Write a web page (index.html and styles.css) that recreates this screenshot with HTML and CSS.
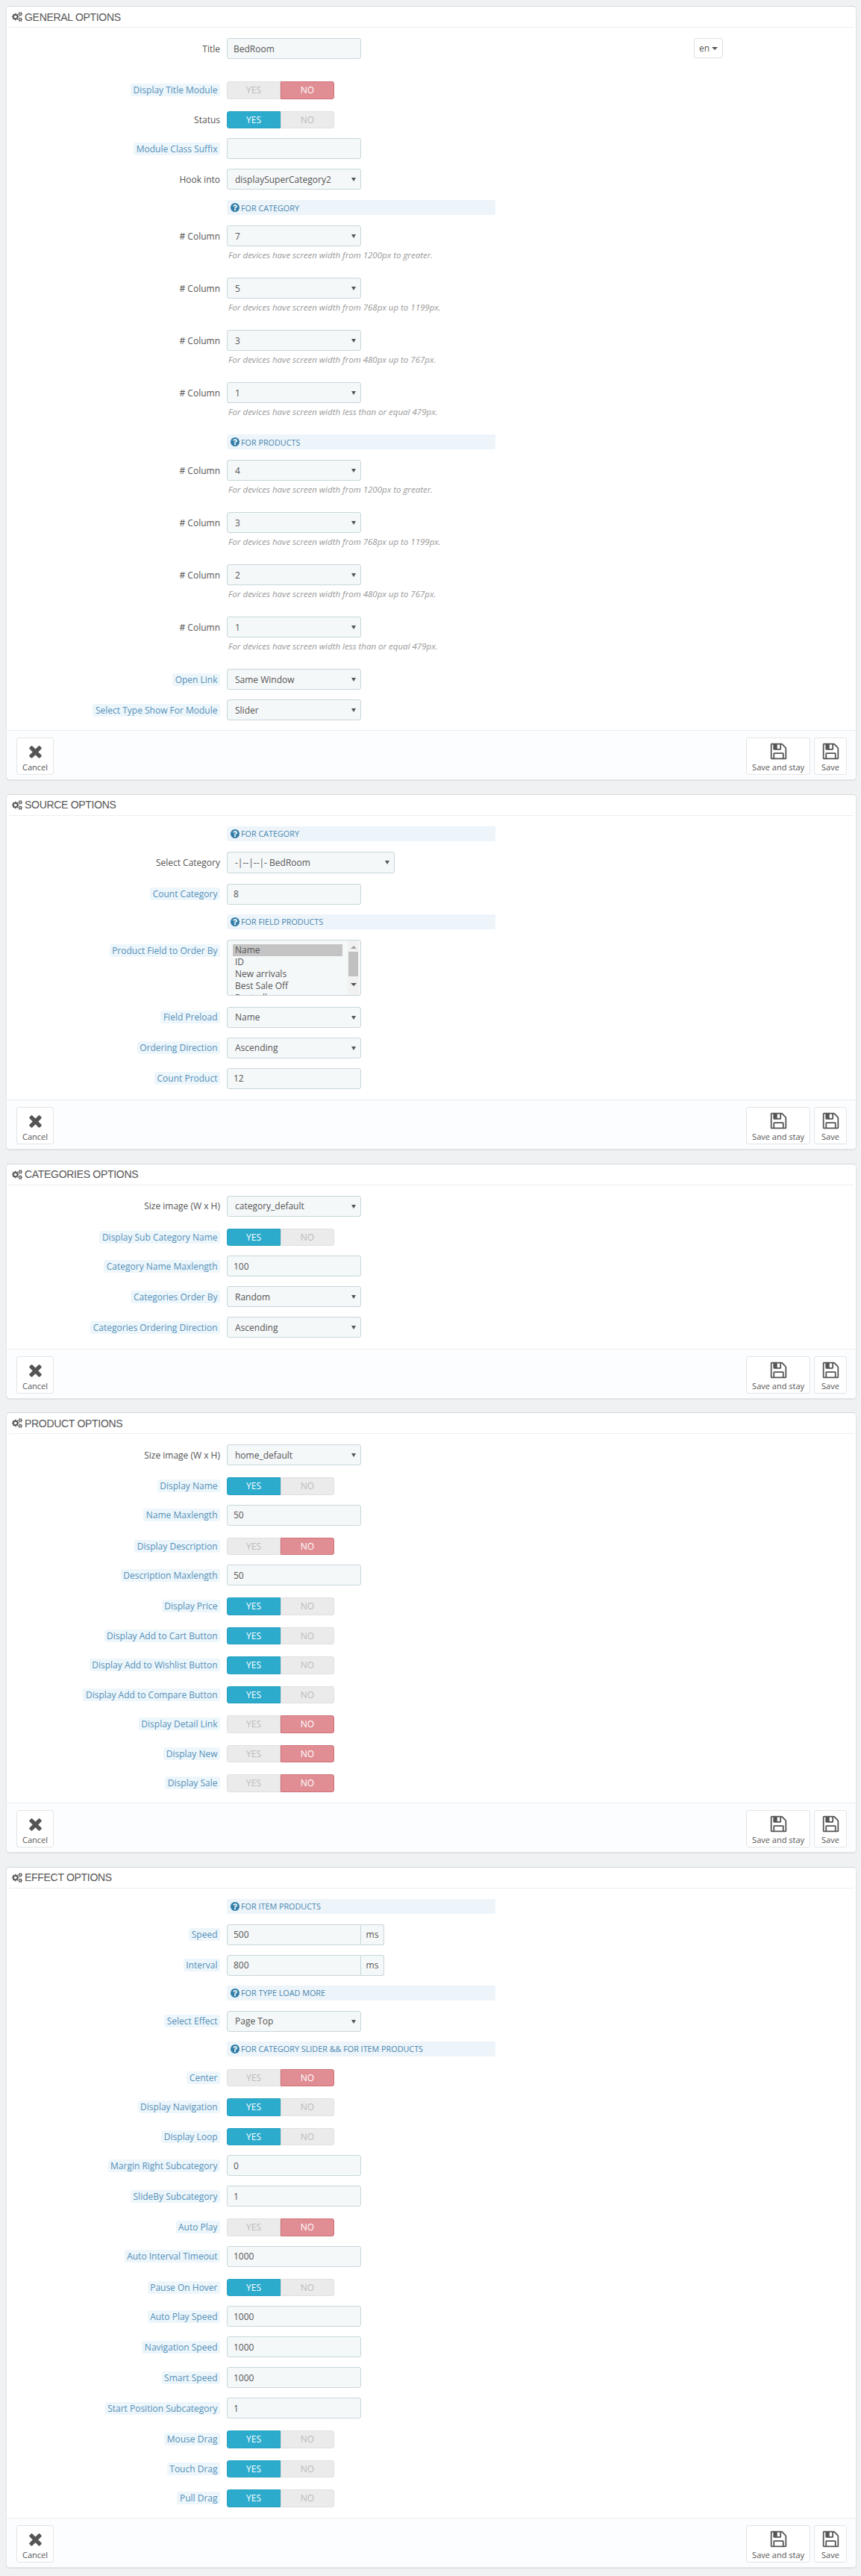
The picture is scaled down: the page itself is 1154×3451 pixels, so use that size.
FILE: index.html
```html
<!DOCTYPE html>
<html lang="en">
<head>
    <meta charset="UTF-8">
    <title>Module options</title>
    <link rel="stylesheet" href="styles.css">
</head>
<body>
    <svg class="icon-defs" xmlns="http://www.w3.org/2000/svg">
        <symbol id="i-cogs" viewBox="0 0 2048 1792"><path d="M896 896q0-106-75-181t-181-75-181 75-75 181 75 181 181 75 181-75 75-181zm768 512q0-52-38-90t-90-38-90 38-38 90q0 53 37.5 90.5t90.5 37.5 90.5-37.5 37.5-90.5zm0-1024q0-52-38-90t-90-38-90 38-38 90q0 53 37.5 90.5t90.5 37.5 90.5-37.5 37.5-90.5zm-384 421v185q0 10-7 19.5t-16 10.5l-155 24q-11 35-32 76 34 48 90 115 7 11 7 20 0 12-7 19-23 30-82.5 89.5t-78.5 59.5q-11 0-21-7l-115-90q-37 19-77 31-11 108-23 155-7 24-30 24h-186q-11 0-20-7.5t-10-17.5l-23-153q-34-10-75-31l-118 89q-7 7-20 7-11 0-21-8-144-133-144-160 0-9 7-19 10-14 41-53t47-61q-23-44-35-82l-152-24q-10-1-17-9.5t-7-19.5v-185q0-10 7-19.5t16-10.5l155-24q11-35 32-76-34-48-90-115-7-11-7-20 0-12 7-20 22-30 82-89t79-59q11 0 21 7l115 90q34-18 77-32 11-108 23-154 7-24 30-24h186q11 0 20 7.5t10 17.5l23 153q34 10 75 31l118-89q8-7 20-7 11 0 21 8 144 133 144 160 0 8-7 19-12 16-42 54t-45 60q23 48 34 82l152 23q10 2 17 10.5t7 19.5zm640 533v140q0 16-149 31-12 27-30 52 51 113 51 138 0 4-4 7-122 71-124 71-8 0-46-47t-52-68q-20 2-30 2t-30-2q-14 21-52 68t-46 47q-2 0-124-71-4-3-4-7 0-25 51-138-18-25-30-52-149-15-149-31v-140q0-16 149-31 13-29 30-52-51-113-51-138 0-4 4-7 4-2 35-20t59-34 30-16q8 0 46 46.5t52 67.5q20-2 30-2t30 2q51-71 92-112l6-2q4 0 124 70 4 3 4 7 0 25-51 138 17 23 30 52 149 15 149 31zm0-1024v140q0 16-149 31-12 27-30 52 51 113 51 138 0 4-4 7-122 71-124 71-8 0-46-47t-52-68q-20 2-30 2t-30-2q-14 21-52 68t-46 47q-2 0-124-71-4-3-4-7 0-25 51-138-18-25-30-52-149-15-149-31v-140q0-16 149-31 13-29 30-52-51-113-51-138 0-4 4-7 4-2 35-20t59-34 30-16q8 0 46 46.5t52 67.5q20-2 30-2t30 2q51-71 92-112l6-2q4 0 124 70 4 3 4 7 0 25-51 138 17 23 30 52 149 15 149 31z"/></symbol>
        <symbol id="i-times" viewBox="0 0 1792 1792"><path d="M1490 1322q0 40-28 68l-136 136q-28 28-68 28t-68-28l-294-294-294 294q-28 28-68 28t-68-28l-136-136q-28-28-28-68t28-68l294-294-294-294q-28-28-28-68t28-68l136-136q28-28 68-28t68 28l294 294 294-294q28-28 68-28t68 28l136 136q28 28 28 68t-28 68l-294 294 294 294q28 28 28 68z"/></symbol>
        <symbol id="i-save" viewBox="0 0 1792 1792"><path d="M512 1536h768v-384h-768v384zm896 0h128v-896q0-14-10-38.5t-20-34.5l-281-281q-10-10-34-20t-39-10v416q0 40-28 68t-68 28h-576q-40 0-68-28t-28-68v-416h-128v1280h128v-416q0-40 28-68t68-28h832q40 0 68 28t28 68v416zm-384-928v-320q0-13-9.5-22.5t-22.5-9.5h-192q-13 0-22.5 9.5t-9.5 22.5v320q0 13 9.5 22.5t22.5 9.5h192q13 0 22.5-9.5t9.5-22.5zm640 32v928q0 40-28 68t-68 28h-1344q-40 0-68-28t-28-68v-1344q0-40 28-68t68-28h928q40 0 88 20t76 48l280 280q28 28 48 76t20 88z"/></symbol>
        <symbol id="i-help" viewBox="128 128 1536 1536"><path d="M1024 1376v-192q0-14-9-23t-23-9h-192q-14 0-23 9t-9 23v192q0 14 9 23t23 9h192q14 0 23-9t9-23zm256-672q0-88-55.5-163t-138.5-116-170-41q-243 0-371 213-15 24 8 42l132 100q7 6 19 6 16 0 25-12 53-68 86-92 34-24 86-24 48 0 85.5 26t37.5 59q0 38-20 61t-68 45q-63 28-115.5 86.5t-52.5 125.5v36q0 14 9 23t23 9h192q14 0 23-9t9-23q0-19 21.5-49.5t54.5-49.5q32-18 49-28.5t46-35 44.5-48 28-60.5 12.5-81zm384 192q0 209-103 385.5t-279.5 279.5-385.5 103-385.5-103-279.5-279.5-103-385.5 103-385.5 279.5-279.5 385.5-103 385.5 103 279.5 279.5 103 385.5z"/></symbol>
    </svg>

    <!-- general -->
    <section class="panel">
        <h3 class="panel-heading"><svg class="cogs"><use href="#i-cogs"/></svg>GENERAL OPTIONS</h3>
        <div class="panel-body panel-body-flush">
            <div class="row row-title">
                <label>Title</label>
                <div class="translatable">
                    <input class="field" type="text" value="BedRoom">
                    <button class="lang-btn" type="button">en<i class="caret"></i></button>
                </div>
            </div>
            <div class="row row-switch">
                <label><span class="hint">Display Title Module</span></label>
                <div class="switch"><span>YES</span><span class="on-no">NO</span></div>
            </div>
            <div class="row row-switch">
                <label>Status</label>
                <div class="switch"><span class="on-yes">YES</span><span>NO</span></div>
            </div>
            <div class="row">
                <label><span class="hint">Module Class Suffix</span></label>
                <input class="field" type="text" value="">
            </div>
            <div class="row row-tall">
                <label>Hook into</label>
                <div class="select-wrap"><select class="field"><option>displaySuperCategory2</option></select></div>
            </div>
            <div class="row row-info">
                <span></span>
                <div class="info"><svg class="help"><use href="#i-help"/></svg>FOR CATEGORY</div>
            </div>
            <div class="row row-help">
                <label># Column</label>
                <div>
                    <div class="select-wrap"><select class="field"><option>7</option></select></div>
                    <p class="help-text">For devices have screen width from 1200px to greater.</p>
                </div>
            </div>
            <div class="row row-help">
                <label># Column</label>
                <div>
                    <div class="select-wrap"><select class="field"><option>5</option></select></div>
                    <p class="help-text">For devices have screen width from 768px up to 1199px.</p>
                </div>
            </div>
            <div class="row row-help">
                <label># Column</label>
                <div>
                    <div class="select-wrap"><select class="field"><option>3</option></select></div>
                    <p class="help-text">For devices have screen width from 480px up to 767px.</p>
                </div>
            </div>
            <div class="row row-help">
                <label># Column</label>
                <div>
                    <div class="select-wrap"><select class="field"><option>1</option></select></div>
                    <p class="help-text">For devices have screen width less than or equal 479px.</p>
                </div>
            </div>
            <div class="row row-info">
                <span></span>
                <div class="info"><svg class="help"><use href="#i-help"/></svg>FOR PRODUCTS</div>
            </div>
            <div class="row row-help">
                <label># Column</label>
                <div>
                    <div class="select-wrap"><select class="field"><option>4</option></select></div>
                    <p class="help-text">For devices have screen width from 1200px to greater.</p>
                </div>
            </div>
            <div class="row row-help">
                <label># Column</label>
                <div>
                    <div class="select-wrap"><select class="field"><option>3</option></select></div>
                    <p class="help-text">For devices have screen width from 768px up to 1199px.</p>
                </div>
            </div>
            <div class="row row-help">
                <label># Column</label>
                <div>
                    <div class="select-wrap"><select class="field"><option>2</option></select></div>
                    <p class="help-text">For devices have screen width from 480px up to 767px.</p>
                </div>
            </div>
            <div class="row row-help">
                <label># Column</label>
                <div>
                    <div class="select-wrap"><select class="field"><option>1</option></select></div>
                    <p class="help-text">For devices have screen width less than or equal 479px.</p>
                </div>
            </div>
            <div class="row">
                <label><span class="hint">Open Link</span></label>
                <div class="select-wrap"><select class="field"><option>Same Window</option></select></div>
            </div>
            <div class="row">
                <label><span class="hint">Select Type Show For Module</span></label>
                <div class="select-wrap"><select class="field"><option>Slider</option></select></div>
            </div>
        </div>
        <div class="panel-footer">
            <a class="tool-btn"><svg><use href="#i-times"/></svg>Cancel</a>
            <a class="tool-btn push-right"><svg><use href="#i-save"/></svg>Save and stay</a>
            <a class="tool-btn"><svg><use href="#i-save"/></svg>Save</a>
        </div>
    </section>

    <!-- source -->
    <section class="panel">
        <h3 class="panel-heading"><svg class="cogs"><use href="#i-cogs"/></svg>SOURCE OPTIONS</h3>
        <div class="panel-body">
            <div class="row row-info">
                <span></span>
                <div class="info"><svg class="help"><use href="#i-help"/></svg>FOR CATEGORY</div>
            </div>
            <div class="row row-tall">
                <label>Select Category</label>
                <div class="select-wrap select-wide"><select class="field"><option>-|--|--|- BedRoom</option></select></div>
            </div>
            <div class="row">
                <label><span class="hint">Count Category</span></label>
                <input class="field" type="text" value="8">
            </div>
            <div class="row row-info">
                <span></span>
                <div class="info"><svg class="help"><use href="#i-help"/></svg>FOR FIELD PRODUCTS</div>
            </div>
            <div class="row row-list">
                <label><span class="hint">Product Field to Order By</span></label>
                <div class="listbox">
                    <ul class="listbox-items">
                        <li class="selected">Name</li>
                        <li>ID</li>
                        <li>New arrivals</li>
                        <li>Best Sale Off</li>
                        <li>Bestseller</li>
                    </ul>
                    <div class="scrollbar"><i class="arrow-up"></i><b></b><i class="arrow-down"></i></div>
                </div>
            </div>
            <div class="row">
                <label><span class="hint">Field Preload</span></label>
                <div class="select-wrap"><select class="field"><option>Name</option></select></div>
            </div>
            <div class="row">
                <label><span class="hint">Ordering Direction</span></label>
                <div class="select-wrap"><select class="field"><option>Ascending</option></select></div>
            </div>
            <div class="row">
                <label><span class="hint">Count Product</span></label>
                <input class="field" type="text" value="12">
            </div>
        </div>
        <div class="panel-footer">
            <a class="tool-btn"><svg><use href="#i-times"/></svg>Cancel</a>
            <a class="tool-btn push-right"><svg><use href="#i-save"/></svg>Save and stay</a>
            <a class="tool-btn"><svg><use href="#i-save"/></svg>Save</a>
        </div>
    </section>

    <!-- categories -->
    <section class="panel">
        <h3 class="panel-heading"><svg class="cogs"><use href="#i-cogs"/></svg>CATEGORIES OPTIONS</h3>
        <div class="panel-body">
            <div class="row">
                <label>Size image (W x H)</label>
                <div class="select-wrap"><select class="field"><option>category_default</option></select></div>
            </div>
            <div class="row row-switch">
                <label><span class="hint">Display Sub Category Name</span></label>
                <div class="switch"><span class="on-yes">YES</span><span>NO</span></div>
            </div>
            <div class="row">
                <label><span class="hint">Category Name Maxlength</span></label>
                <input class="field" type="text" value="100">
            </div>
            <div class="row">
                <label><span class="hint">Categories Order By</span></label>
                <div class="select-wrap"><select class="field"><option>Random</option></select></div>
            </div>
            <div class="row">
                <label><span class="hint">Categories Ordering Direction</span></label>
                <div class="select-wrap"><select class="field"><option>Ascending</option></select></div>
            </div>
        </div>
        <div class="panel-footer">
            <a class="tool-btn"><svg><use href="#i-times"/></svg>Cancel</a>
            <a class="tool-btn push-right"><svg><use href="#i-save"/></svg>Save and stay</a>
            <a class="tool-btn"><svg><use href="#i-save"/></svg>Save</a>
        </div>
    </section>

    <!-- product -->
    <section class="panel">
        <h3 class="panel-heading"><svg class="cogs"><use href="#i-cogs"/></svg>PRODUCT OPTIONS</h3>
        <div class="panel-body">
            <div class="row">
                <label>Size image (W x H)</label>
                <div class="select-wrap"><select class="field"><option>home_default</option></select></div>
            </div>
            <div class="row row-switch">
                <label><span class="hint">Display Name</span></label>
                <div class="switch"><span class="on-yes">YES</span><span>NO</span></div>
            </div>
            <div class="row">
                <label><span class="hint">Name Maxlength</span></label>
                <input class="field" type="text" value="50">
            </div>
            <div class="row row-switch">
                <label><span class="hint">Display Description</span></label>
                <div class="switch"><span>YES</span><span class="on-no">NO</span></div>
            </div>
            <div class="row">
                <label><span class="hint">Description Maxlength</span></label>
                <input class="field" type="text" value="50">
            </div>
            <div class="row row-switch">
                <label><span class="hint">Display Price</span></label>
                <div class="switch"><span class="on-yes">YES</span><span>NO</span></div>
            </div>
            <div class="row row-switch">
                <label><span class="hint">Display Add to Cart Button</span></label>
                <div class="switch"><span class="on-yes">YES</span><span>NO</span></div>
            </div>
            <div class="row row-switch">
                <label><span class="hint">Display Add to Wishlist Button</span></label>
                <div class="switch"><span class="on-yes">YES</span><span>NO</span></div>
            </div>
            <div class="row row-switch">
                <label><span class="hint">Display Add to Compare Button</span></label>
                <div class="switch"><span class="on-yes">YES</span><span>NO</span></div>
            </div>
            <div class="row row-switch">
                <label><span class="hint">Display Detail Link</span></label>
                <div class="switch"><span>YES</span><span class="on-no">NO</span></div>
            </div>
            <div class="row row-switch">
                <label><span class="hint">Display New</span></label>
                <div class="switch"><span>YES</span><span class="on-no">NO</span></div>
            </div>
            <div class="row row-switch">
                <label><span class="hint">Display Sale</span></label>
                <div class="switch"><span>YES</span><span class="on-no">NO</span></div>
            </div>
        </div>
        <div class="panel-footer">
            <a class="tool-btn"><svg><use href="#i-times"/></svg>Cancel</a>
            <a class="tool-btn push-right"><svg><use href="#i-save"/></svg>Save and stay</a>
            <a class="tool-btn"><svg><use href="#i-save"/></svg>Save</a>
        </div>
    </section>

    <!-- effect -->
    <section class="panel">
        <h3 class="panel-heading"><svg class="cogs"><use href="#i-cogs"/></svg>EFFECT OPTIONS</h3>
        <div class="panel-body">
            <div class="row row-info">
                <span></span>
                <div class="info"><svg class="help"><use href="#i-help"/></svg>FOR ITEM PRODUCTS</div>
            </div>
            <div class="row">
                <label><span class="hint">Speed</span></label>
                <div class="input-group"><input class="field" type="text" value="500"><span class="addon">ms</span></div>
            </div>
            <div class="row">
                <label><span class="hint">Interval</span></label>
                <div class="input-group"><input class="field" type="text" value="800"><span class="addon">ms</span></div>
            </div>
            <div class="row row-info">
                <span></span>
                <div class="info"><svg class="help"><use href="#i-help"/></svg>FOR TYPE LOAD MORE</div>
            </div>
            <div class="row">
                <label><span class="hint">Select Effect</span></label>
                <div class="select-wrap"><select class="field"><option>Page Top</option></select></div>
            </div>
            <div class="row row-info">
                <span></span>
                <div class="info"><svg class="help"><use href="#i-help"/></svg>FOR CATEGORY SLIDER &amp;&amp; FOR ITEM PRODUCTS</div>
            </div>
            <div class="row row-switch">
                <label><span class="hint">Center</span></label>
                <div class="switch"><span>YES</span><span class="on-no">NO</span></div>
            </div>
            <div class="row row-switch">
                <label><span class="hint">Display Navigation</span></label>
                <div class="switch"><span class="on-yes">YES</span><span>NO</span></div>
            </div>
            <div class="row row-switch">
                <label><span class="hint">Display Loop</span></label>
                <div class="switch"><span class="on-yes">YES</span><span>NO</span></div>
            </div>
            <div class="row">
                <label><span class="hint">Margin Right Subcategory</span></label>
                <input class="field" type="text" value="0">
            </div>
            <div class="row">
                <label><span class="hint">SlideBy Subcategory</span></label>
                <input class="field" type="text" value="1">
            </div>
            <div class="row row-switch">
                <label><span class="hint">Auto Play</span></label>
                <div class="switch"><span>YES</span><span class="on-no">NO</span></div>
            </div>
            <div class="row">
                <label><span class="hint">Auto Interval Timeout</span></label>
                <input class="field" type="text" value="1000">
            </div>
            <div class="row row-switch">
                <label><span class="hint">Pause On Hover</span></label>
                <div class="switch"><span class="on-yes">YES</span><span>NO</span></div>
            </div>
            <div class="row">
                <label><span class="hint">Auto Play Speed</span></label>
                <input class="field" type="text" value="1000">
            </div>
            <div class="row">
                <label><span class="hint">Navigation Speed</span></label>
                <input class="field" type="text" value="1000">
            </div>
            <div class="row">
                <label><span class="hint">Smart Speed</span></label>
                <input class="field" type="text" value="1000">
            </div>
            <div class="row">
                <label><span class="hint">Start Position Subcategory</span></label>
                <input class="field" type="text" value="1">
            </div>
            <div class="row row-switch">
                <label><span class="hint">Mouse Drag</span></label>
                <div class="switch"><span class="on-yes">YES</span><span>NO</span></div>
            </div>
            <div class="row row-switch">
                <label><span class="hint">Touch Drag</span></label>
                <div class="switch"><span class="on-yes">YES</span><span>NO</span></div>
            </div>
            <div class="row row-switch">
                <label><span class="hint">Pull Drag</span></label>
                <div class="switch"><span class="on-yes">YES</span><span>NO</span></div>
            </div>
        </div>
        <div class="panel-footer">
            <a class="tool-btn"><svg><use href="#i-times"/></svg>Cancel</a>
            <a class="tool-btn push-right"><svg><use href="#i-save"/></svg>Save and stay</a>
            <a class="tool-btn"><svg><use href="#i-save"/></svg>Save</a>
        </div>
    </section>
</body>
</html>
```

FILE: styles.css
```css
* {
    box-sizing: border-box;
}
body {
    margin: 0;
    padding: 8px 6px 0 8px;
    background: #eff1f2;
    font-family: "Open Sans", sans-serif;
    font-size: 12px;
    color: #555;
}
.icon-defs {
    display: none;
}
.panel {
    background: #fff;
    border: 1px solid #e4e6e8;
    border-top: 1px solid #d3d8db;
    border-radius: 5px;
    box-shadow: 0 1px 1px rgba(0,0,0,0.08);
    margin-bottom: 18.5px;
}
.panel-heading {
    display: flex;
    align-items: center;
    height: 28px;
    margin: 0 3px;
    padding-left: 4px;
    border-bottom: 1px solid #eeeeee;
    font-family: "Liberation Sans Narrow", "Liberation Sans", sans-serif;
    font-size: 14px;
    font-weight: normal;
    letter-spacing: -0.3px;
    color: #555;
}
.cogs {
    width: 15px;
    height: 13px;
    margin-right: 2px;
    fill: #555;
}
.panel-body {
    padding: 14px 0 1.5px;
}
.panel-body-flush {
    padding-bottom: 0;
}
.row {
    display: grid;
    grid-template-columns: 286px 1fr;
    column-gap: 9px;
    align-items: center;
    margin-bottom: 13px;
}
.row label {
    text-align: right;
    line-height: 17px;
}
.row-title {
    margin-bottom: 27px;
}
.row-tall {
    margin-bottom: 14px;
}
.row-switch {
    padding-top: 3px;
}
.row-info {
    margin-bottom: 14px;
}
.row-help {
    align-items: start;
}
.row-help label {
    padding-top: 6px;
}
.row-list {
    align-items: start;
    margin-bottom: 15px;
}
.row-list label {
    padding-top: 6px;
}
.hint {
    display: inline-block;
    padding: 0 3.5px;
    background: #edf6fb;
    border-radius: 3px;
    color: #5590b8;
}
.field {
    display: block;
    width: 180px;
    height: 28px;
    padding: 0 8px;
    background: #f5f8f9;
    border: 1px solid #c7d6db;
    border-radius: 3px;
    font-family: "Open Sans", sans-serif;
    font-size: 12px;
    color: #555;
}
.translatable {
    display: flex;
}
.lang-btn {
    width: 39px;
    height: 27px;
    margin-left: 446px;
    padding: 0;
    background: #fff;
    border: 1px solid #dcdfe1;
    border-radius: 3px;
    font-family: "Open Sans", sans-serif;
    font-size: 12px;
    color: #555;
}
.caret {
    display: inline-block;
    margin-left: 3px;
    vertical-align: 2px;
    border-top: 4px solid #555;
    border-left: 4px solid transparent;
    border-right: 4px solid transparent;
}
.select-wrap {
    position: relative;
    width: 180px;
}
.select-wrap select {
    padding-left: 10px;
    appearance: none;
}
.select-wrap::after {
    content: "";
    position: absolute;
    top: 12px;
    right: 7px;
    border-top: 5px solid #555;
    border-left: 3px solid transparent;
    border-right: 3px solid transparent;
}
.select-wide {
    width: 225px;
}
.select-wide select {
    width: 225px;
    height: 29px;
}
.switch {
    display: flex;
    width: 144px;
    height: 23.5px;
}
.switch span {
    flex: 1;
    line-height: 21.5px;
    text-align: center;
    background: #ebebeb;
    border: 1px solid #e0e0e0;
    color: #bbb;
}
.switch span:first-child {
    border-radius: 3px 0 0 3px;
}
.switch span:last-child {
    border-radius: 0 3px 3px 0;
}
.switch .on-yes {
    background: #2cabcd;
    border-color: #28a0c0;
    color: #fff;
}
.switch .on-no {
    background: #e08e94;
    border-color: #cf7076;
    border-radius: 3px;
    color: #fff;
}
.info {
    display: flex;
    align-items: center;
    width: 360px;
    height: 20px;
    padding-left: 5px;
    background: #edf5fb;
    border-radius: 2px;
    font-size: 10.8px;
    color: #4a86ad;
}
.help {
    width: 12px;
    height: 12px;
    margin-right: 2px;
    fill: #337ea9;
}
.help-text {
    height: 29px;
    margin: 0;
    padding: 3px 0 0 2px;
    line-height: 17px;
    font-size: 11.5px;
    font-style: italic;
    color: #999;
}
.listbox {
    display: flex;
    width: 180px;
    height: 75px;
    padding: 5px 2px 0 7px;
    background: #f5f8f9;
    border: 1px solid #c7d6db;
    border-radius: 3px;
    overflow: hidden;
}
.listbox-items {
    width: 147px;
    margin: 0 7px 0 0;
    padding: 0;
    list-style: none;
}
.listbox-items li {
    height: 16px;
    padding-left: 3px;
    line-height: 16px;
}
.listbox-items .selected {
    background: #c4c4c4;
}
.scrollbar {
    display: flex;
    flex-direction: column;
    align-items: center;
    width: 15px;
    margin-top: -5px;
    background: #f1f1f1;
}
.scrollbar b {
    width: 13px;
    height: 33px;
    margin: 4px 0 9px;
    background: #c1c1c1;
}
.arrow-up {
    margin-top: 7px;
    border-bottom: 4px solid #a3a3a3;
    border-left: 4px solid transparent;
    border-right: 4px solid transparent;
}
.arrow-down {
    border-top: 4px solid #505050;
    border-left: 4px solid transparent;
    border-right: 4px solid transparent;
}
.input-group {
    display: flex;
    width: 211px;
}
.input-group .field {
    border-radius: 3px 0 0 3px;
}
.addon {
    flex: 1;
    height: 28px;
    line-height: 26px;
    text-align: center;
    background: #f5f8f9;
    border: 1px solid #c7d6db;
    border-left: 0;
    border-radius: 0 3px 3px 0;
}
.panel-footer {
    display: flex;
    gap: 5px;
    height: 66px;
    padding: 9px 12px 0 13px;
    background: #fcfdfe;
    border-top: 1px solid #eaedef;
    border-radius: 0 0 5px 5px;
}
.tool-btn {
    display: flex;
    flex-direction: column;
    align-items: center;
    height: 50px;
    min-width: 44px;
    padding: 5px 7px 0;
    background: #fff;
    border: 1px solid #e2e4e6;
    border-radius: 3px;
    font-size: 11px;
    line-height: 17px;
    color: #555;
}
.tool-btn svg {
    width: 25px;
    height: 25px;
    fill: #555;
}
.push-right {
    margin-left: auto;
}
```
